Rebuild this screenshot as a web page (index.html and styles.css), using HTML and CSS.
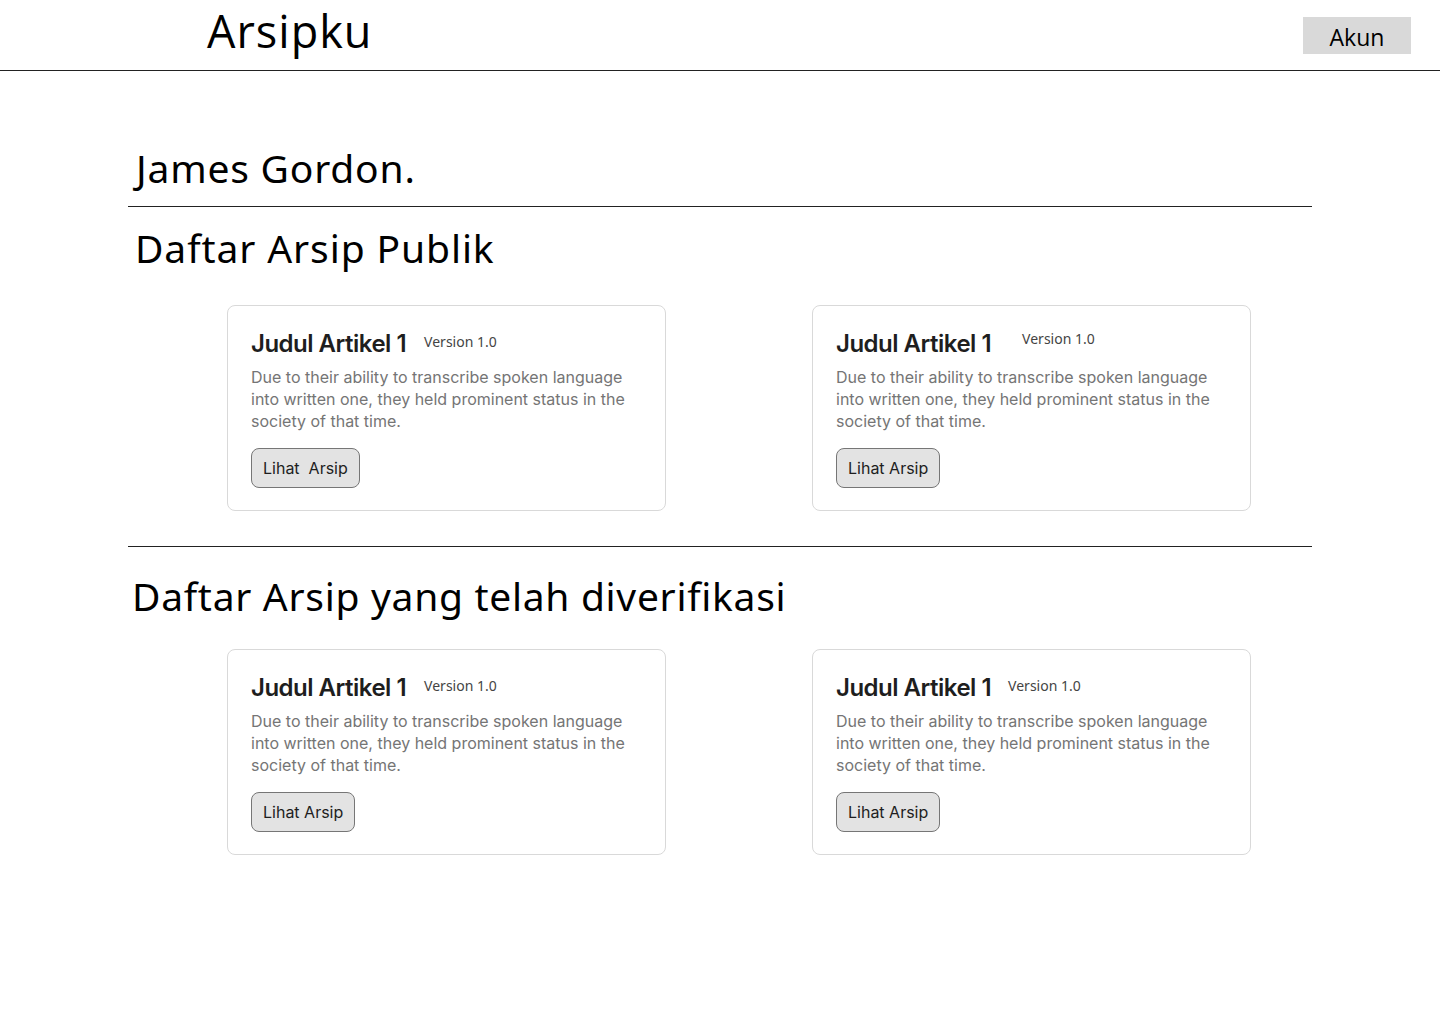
FILE: index.html
```html
<!DOCTYPE html>
<html lang="id">
<head>
<meta charset="utf-8">
<title>Arsipku</title>
<link rel="stylesheet" href="styles.css">
</head>
<body>
<header class="topbar">
  <div class="logo">Arsipku</div>
  <button class="account">Akun</button>
</header>
<main class="page">
  <h1 class="user-name">James Gordon.</h1>
  <hr class="rule">
  <h2 class="section-title">Daftar Arsip Publik</h2>
  <div class="card-grid">
    <article class="card">
      <div class="card-head"><h3 class="card-title">Judul Artikel 1</h3><span class="version">Version 1.0</span></div>
      <p class="card-text">Due to their ability to transcribe spoken language into written one, they held prominent status in the society of that time.</p>
      <button class="card-btn">Lihat&nbsp; Arsip</button>
    </article>
    <article class="card">
      <div class="card-head"><h3 class="card-title">Judul Artikel 1</h3><span class="version version-raised">Version 1.0</span></div>
      <p class="card-text">Due to their ability to transcribe spoken language into written one, they held prominent status in the society of that time.</p>
      <button class="card-btn">Lihat Arsip</button>
    </article>
  </div>
  <hr class="rule rule-lower">
  <h2 class="section-title section-title-wide">Daftar Arsip yang telah diverifikasi</h2>
  <div class="card-grid">
    <article class="card">
      <div class="card-head"><h3 class="card-title">Judul Artikel 1</h3><span class="version">Version 1.0</span></div>
      <p class="card-text">Due to their ability to transcribe spoken language into written one, they held prominent status in the society of that time.</p>
      <button class="card-btn">Lihat Arsip</button>
    </article>
    <article class="card">
      <div class="card-head"><h3 class="card-title">Judul Artikel 1</h3><span class="version version-near">Version 1.0</span></div>
      <p class="card-text">Due to their ability to transcribe spoken language into written one, they held prominent status in the society of that time.</p>
      <button class="card-btn">Lihat Arsip</button>
    </article>
  </div>
</main>
</body>
</html>
```
FILE: styles.css
```css
* { box-sizing: border-box; }
html, body { margin: 0; padding: 0; background: #fff; }
body { font-family: "Open Sans", "Noto Sans", sans-serif; color: #000; }

.topbar {
  height: 71px;
  border-bottom: 1px solid #222;
  display: flex;
  align-items: flex-start;
  justify-content: space-between;
  padding-left: 207px;
  padding-right: 29px;
}
.logo {
  font-family: "Open Sans", sans-serif;
  font-size: 45px;
  letter-spacing: 1px;
  line-height: normal;
}
.account {
  margin-top: 17px;
  width: 108px;
  height: 37px;
  background: #d9d9d9;
  border: none;
  font-family: "Open Sans", sans-serif;
  font-size: 23px;
  line-height: 37px;
  padding: 0;
  padding-top: 2px;
  color: #000;
}

.page {
  width: 1184px;
  margin: 0 auto;
}
.user-name {
  margin: 0;
  padding-top: 67px;
  padding-bottom: 8px;
  padding-left: 8px;
  font-family: "Noto Sans", sans-serif;
  font-weight: 400;
  font-size: 39px;
  line-height: 60px;
  letter-spacing: 0.8px;
}
.rule {
  margin: 0;
  border: none;
  border-top: 1px solid #222;
}
.section-title {
  margin: 0;
  padding-top: 5px;
  padding-left: 7px;
  font-family: "Noto Sans", sans-serif;
  font-weight: 400;
  font-size: 39px;
  line-height: 72px;
  letter-spacing: 0.9px;
}
.section-title-wide {
  padding-left: 4px;
  padding-top: 13px;
  margin-bottom: -4px;
  letter-spacing: 0.7px;
}
.rule-lower { margin-top: 35px; }
.card-grid {
  display: grid;
  grid-template-columns: 439px 439px;
  column-gap: 146px;
  padding-left: 99px;
  margin-top: 21px;
}
.card {
  border: 1px solid #d9d9d9;
  border-radius: 8px;
  padding: 24px 23px 23px;
  height: 206px;
  background: #fff;
}
.card-head {
  display: flex;
  align-items: flex-start;
  gap: 18px;
}
.card-title {
  margin: 0;
  font-family: "Inter", sans-serif;
  font-weight: 600;
  font-size: 24px;
  line-height: 28px;
  letter-spacing: -0.5px;
  color: #1e1e1e;
}
.version {
  font-family: "Noto Sans", sans-serif;
  font-size: 14px;
  color: #444;
  line-height: 18px;
  margin-top: 3px;
}
.version-raised { margin-top: 0; margin-left: 13px; }
.version-near { margin-left: -1px; }
.card-text {
  margin: 8px 0 16px;
  font-family: "Inter", sans-serif;
  font-size: 16px;
  line-height: 22px;
  color: #757575;
}
.card-btn {
  display: block;
  height: 40px;
  padding: 0 11px;
  border: 1px solid #767676;
  border-radius: 8px;
  background: #e3e3e3;
  font-family: "Inter", sans-serif;
  font-size: 16px;
  color: #1e1e1e;
}
```
